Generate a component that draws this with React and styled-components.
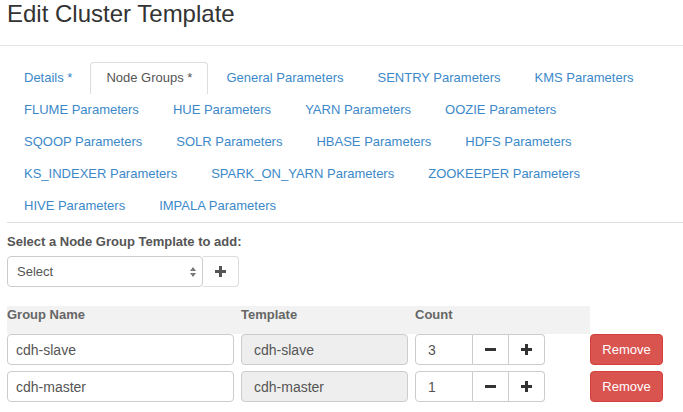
import React from "react";
import styled, { createGlobalStyle } from "styled-components";

const GlobalStyle = createGlobalStyle`
  html, body {
    margin: 0;
    padding: 0;
    background: #fff;
  }
  body {
    font-family: "Liberation Sans", Arial, Helvetica, sans-serif;
    font-size: 13px;
    color: #333;
  }
  * {
    box-sizing: border-box;
  }
`;

const tabRows = [
  ["Details *", "Node Groups *", "General Parameters", "SENTRY Parameters", "KMS Parameters"],
  ["FLUME Parameters", "HUE Parameters", "YARN Parameters", "OOZIE Parameters"],
  ["SQOOP Parameters", "SOLR Parameters", "HBASE Parameters", "HDFS Parameters"],
  ["KS_INDEXER Parameters", "SPARK_ON_YARN Parameters", "ZOOKEEPER Parameters"],
  ["HIVE Parameters", "IMPALA Parameters"],
];

const groups = [
  { name: "cdh-slave", template: "cdh-slave", count: 3 },
  { name: "cdh-master", template: "cdh-master", count: 1 },
];

function MinusIcon() {
  return (
    <svg width="11" height="11" viewBox="0 0 11 11">
      <rect x="0" y="4" width="11" height="3" fill="#333" />
    </svg>
  );
}

function PlusIcon({ color = "#333" }) {
  return (
    <svg width="11" height="11" viewBox="0 0 11 11">
      <rect x="0" y="4" width="11" height="3" fill={color} />
      <rect x="4" y="0" width="3" height="11" fill={color} />
    </svg>
  );
}

function SelectArrows() {
  return (
    <svg width="6" height="10" viewBox="0 0 6 10">
      <path d="M3 0 L6 4 L0 4 Z" fill="#777" />
      <path d="M3 10 L6 6 L0 6 Z" fill="#777" />
    </svg>
  );
}

export default function App() {
  return (
    <Page>
      <GlobalStyle />
      <Header>
        <Title>Edit Cluster Template</Title>
      </Header>
      <Body>
        <Tabs>
          {tabRows.flat().map((label) => (
            <Tab key={label} active={label === "Node Groups *"}>
              {label}
            </Tab>
          ))}
        </Tabs>
        <Content>
          <Label>Select a Node Group Template to add:</Label>
          <InputGroup>
            <SelectBox>
              <span>Select</span>
              <SelectArrows />
            </SelectBox>
            <AddButton>
              <PlusIcon color="#555" />
            </AddButton>
          </InputGroup>
          <Table>
            <Th>Group Name</Th>
            <Th>Template</Th>
            <Th>Count</Th>
            <Th empty />
            {groups.map((g) => (
              <React.Fragment key={g.name}>
                <Cell>
                  <TextInput pad={8}>{g.name}</TextInput>
                </Cell>
                <Cell>
                  <TextInput pad={12} disabled>
                    {g.template}
                  </TextInput>
                </Cell>
                <Cell>
                  <CountGroup>
                    <CountInput>{g.count}</CountInput>
                    <StepButton>
                      <MinusIcon />
                    </StepButton>
                    <StepButton last>
                      <PlusIcon />
                    </StepButton>
                  </CountGroup>
                </Cell>
                <Cell>
                  <RemoveButton>Remove</RemoveButton>
                </Cell>
              </React.Fragment>
            ))}
          </Table>
        </Content>
      </Body>
    </Page>
  );
}

const Page = styled.div`
  width: 683px;
  height: 412px;
  overflow: hidden;
`;

const Header = styled.div`
  height: 46px;
  padding-left: 7px;
  border-bottom: 1px solid #e5e5e5;
`;

const Title = styled.h1`
  margin: 0;
  font-size: 24px;
  font-weight: 400;
  line-height: 28px;
  color: #333;
`;

const Body = styled.div`
  padding-left: 7px;
`;

const Tabs = styled.div`
  display: flex;
  flex-wrap: wrap;
  margin-top: 16px;
  padding-left: 1px;
  border-bottom: 1px solid #ddd;
`;

const Tab = styled.div`
  height: 32px;
  padding: 6px 15px 0;
  margin-right: 2px;
  line-height: 18px;
  font-size: 13px;
  color: ${(p) => (p.active ? "#555" : "#3c89c9")};
  border: 1px solid ${(p) => (p.active ? "#ddd" : "transparent")};
  border-bottom: none;
  border-radius: 4px 4px 0 0;
  background: #fff;
  white-space: nowrap;
`;

const Content = styled.div`
  padding-top: 10px;
`;

const Label = styled.div`
  font-weight: 700;
  font-size: 13px;
  line-height: 18px;
  color: #555;
  margin-bottom: 5px;
`;

const InputGroup = styled.div`
  display: flex;
  height: 31px;
`;

const SelectBox = styled.div`
  width: 196px;
  display: flex;
  align-items: center;
  justify-content: space-between;
  padding: 0 6px 0 9px;
  border: 1px solid #ccc;
  border-radius: 4px;
  font-size: 13px;
  color: #555;
`;

const AddButton = styled.div`
  width: 36px;
  display: flex;
  align-items: center;
  justify-content: center;
  border: 1px solid #ddd;
  border-left: none;
  border-radius: 0 4px 4px 0;
`;

const Table = styled.div`
  display: grid;
  grid-template-columns: 234px 174px 175px 80px;
  margin-top: 19px;
`;

const Th = styled.div`
  height: 28px;
  line-height: 18px;
  font-weight: 700;
  font-size: 13px;
  color: #666;
  background: ${(p) => (p.empty ? "transparent" : "#f2f2f2")};
`;

const Cell = styled.div`
  padding: 0 7px 6px 0;
`;

const TextInput = styled.div`
  height: 31px;
  display: flex;
  align-items: center;
  padding-left: ${(p) => p.pad}px;
  border: 1px solid #ccc;
  border-radius: 4px;
  font-size: 14px;
  color: #555;
  background: ${(p) => (p.disabled ? "#eee" : "#fff")};
`;

const CountGroup = styled.div`
  display: flex;
  height: 31px;
`;

const CountInput = styled.div`
  width: 58px;
  display: flex;
  align-items: center;
  padding-left: 12px;
  border: 1px solid #ccc;
  border-radius: 4px 0 0 4px;
  font-size: 14px;
  color: #555;
`;

const StepButton = styled.div`
  width: 36px;
  display: flex;
  align-items: center;
  justify-content: center;
  border: 1px solid #ccc;
  border-left: none;
  border-radius: ${(p) => (p.last ? "0 4px 4px 0" : "0")};
`;

const RemoveButton = styled.div`
  width: 73px;
  height: 31px;
  display: flex;
  align-items: center;
  justify-content: center;
  background: #d9534f;
  border: 1px solid #d43f3a;
  border-radius: 4px;
  color: #fff;
  font-size: 13px;
`;
